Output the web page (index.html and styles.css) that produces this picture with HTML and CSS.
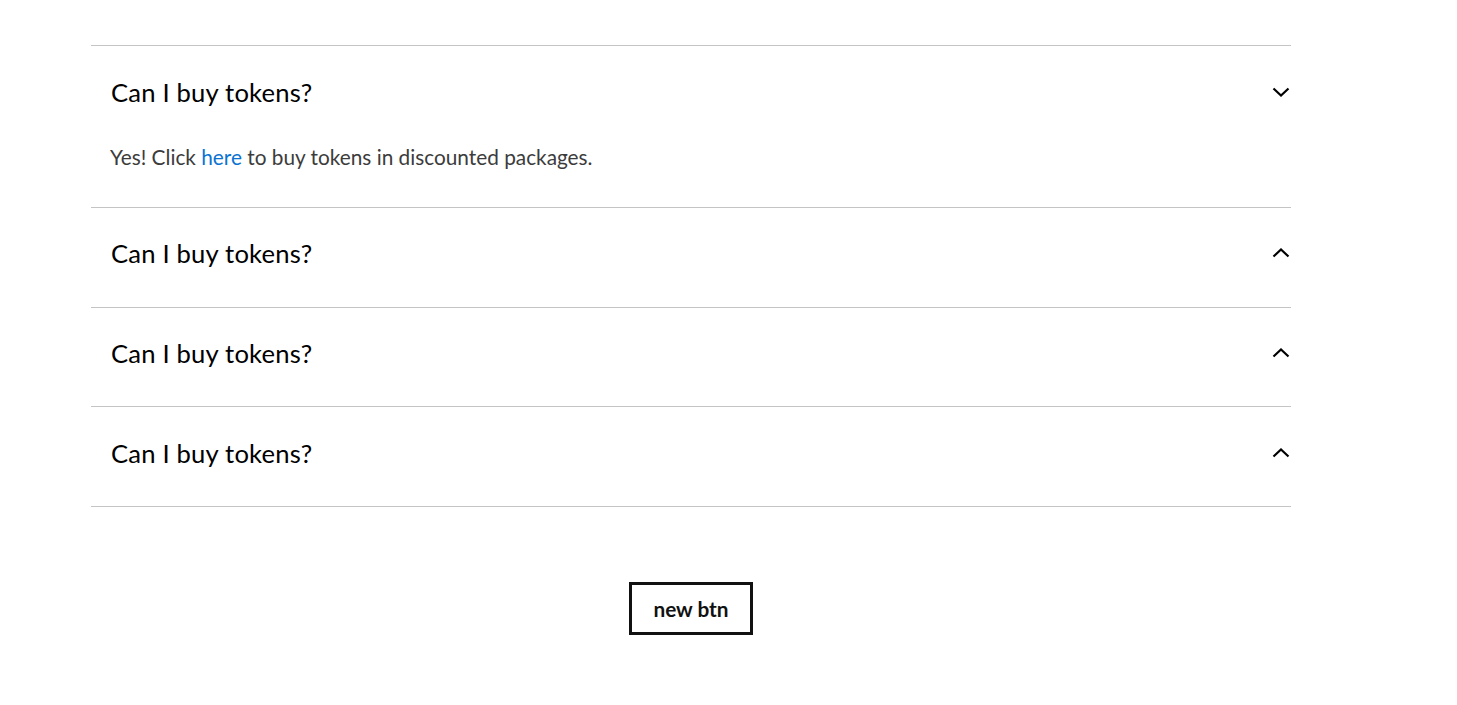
FILE: index.html
```html
<!DOCTYPE html>
<html>
<head>
<meta charset="utf-8">
<link rel="stylesheet" href="styles.css">
</head>
<body>
<div class="page">
  <div class="faq">
    <div class="item open">
      <div class="head">
        <span class="q">Can I buy tokens?</span>
        <svg class="chev" width="18" height="10" viewBox="0 0 18 10"><path d="M1.5 1.5 L9 8.5 L16.5 1.5" fill="none" stroke="#000" stroke-width="2.2"/></svg>
      </div>
      <div class="answer">Yes! Click <a href="#">here</a> to buy tokens in discounted packages.</div>
    </div>
    <div class="item">
      <div class="head">
        <span class="q">Can I buy tokens?</span>
        <svg class="chev" width="18" height="10" viewBox="0 0 18 10"><path d="M1.5 8.5 L9 1.5 L16.5 8.5" fill="none" stroke="#000" stroke-width="2.2"/></svg>
      </div>
    </div>
    <div class="item">
      <div class="head">
        <span class="q">Can I buy tokens?</span>
        <svg class="chev" width="18" height="10" viewBox="0 0 18 10"><path d="M1.5 8.5 L9 1.5 L16.5 8.5" fill="none" stroke="#000" stroke-width="2.2"/></svg>
      </div>
    </div>
    <div class="item">
      <div class="head">
        <span class="q">Can I buy tokens?</span>
        <svg class="chev" width="18" height="10" viewBox="0 0 18 10"><path d="M1.5 8.5 L9 1.5 L16.5 8.5" fill="none" stroke="#000" stroke-width="2.2"/></svg>
      </div>
    </div>
  </div>
  <div class="actions">
    <button class="btn">new btn</button>
  </div>
</div>
</body>
</html>
```
FILE: styles.css
```css
html, body {
  margin: 0;
  padding: 0;
  background: #fff;
}
body {
  font-family: Lato, "Open Sans", sans-serif;
}
.page {
  padding: 45px 0 0 91px;
  width: 1200px;
}
.faq {
  border-top: 1px solid #c4c4c4;
}
.item {
  border-bottom: 1px solid #c4c4c4;
}
.head {
  box-sizing: border-box;
  height: 98.67px;
  display: flex;
  align-items: center;
  justify-content: space-between;
  padding: 0 1px 8px 20px;
}
.open .head {
  height: 99px;
}
.q {
  font-size: 25.6px;
  color: #000;
  letter-spacing: 0.2px;
}
.chev {
  display: block;
}
.answer {
  padding: 0 0 38px 19px;
  font-size: 20.8px;
  color: #3c3c3c;
  line-height: 24px;
}
.answer a {
  color: #0a73d2;
  text-decoration: none;
}
.actions {
  display: flex;
  justify-content: center;
  padding-top: 75px;
}
.btn {
  width: 124px;
  height: 53px;
  border: 3px solid #111;
  background: #fff;
  font-family: Lato, sans-serif;
  font-weight: 700;
  font-size: 20.8px;
  color: #111;
  padding: 0;
}
```
